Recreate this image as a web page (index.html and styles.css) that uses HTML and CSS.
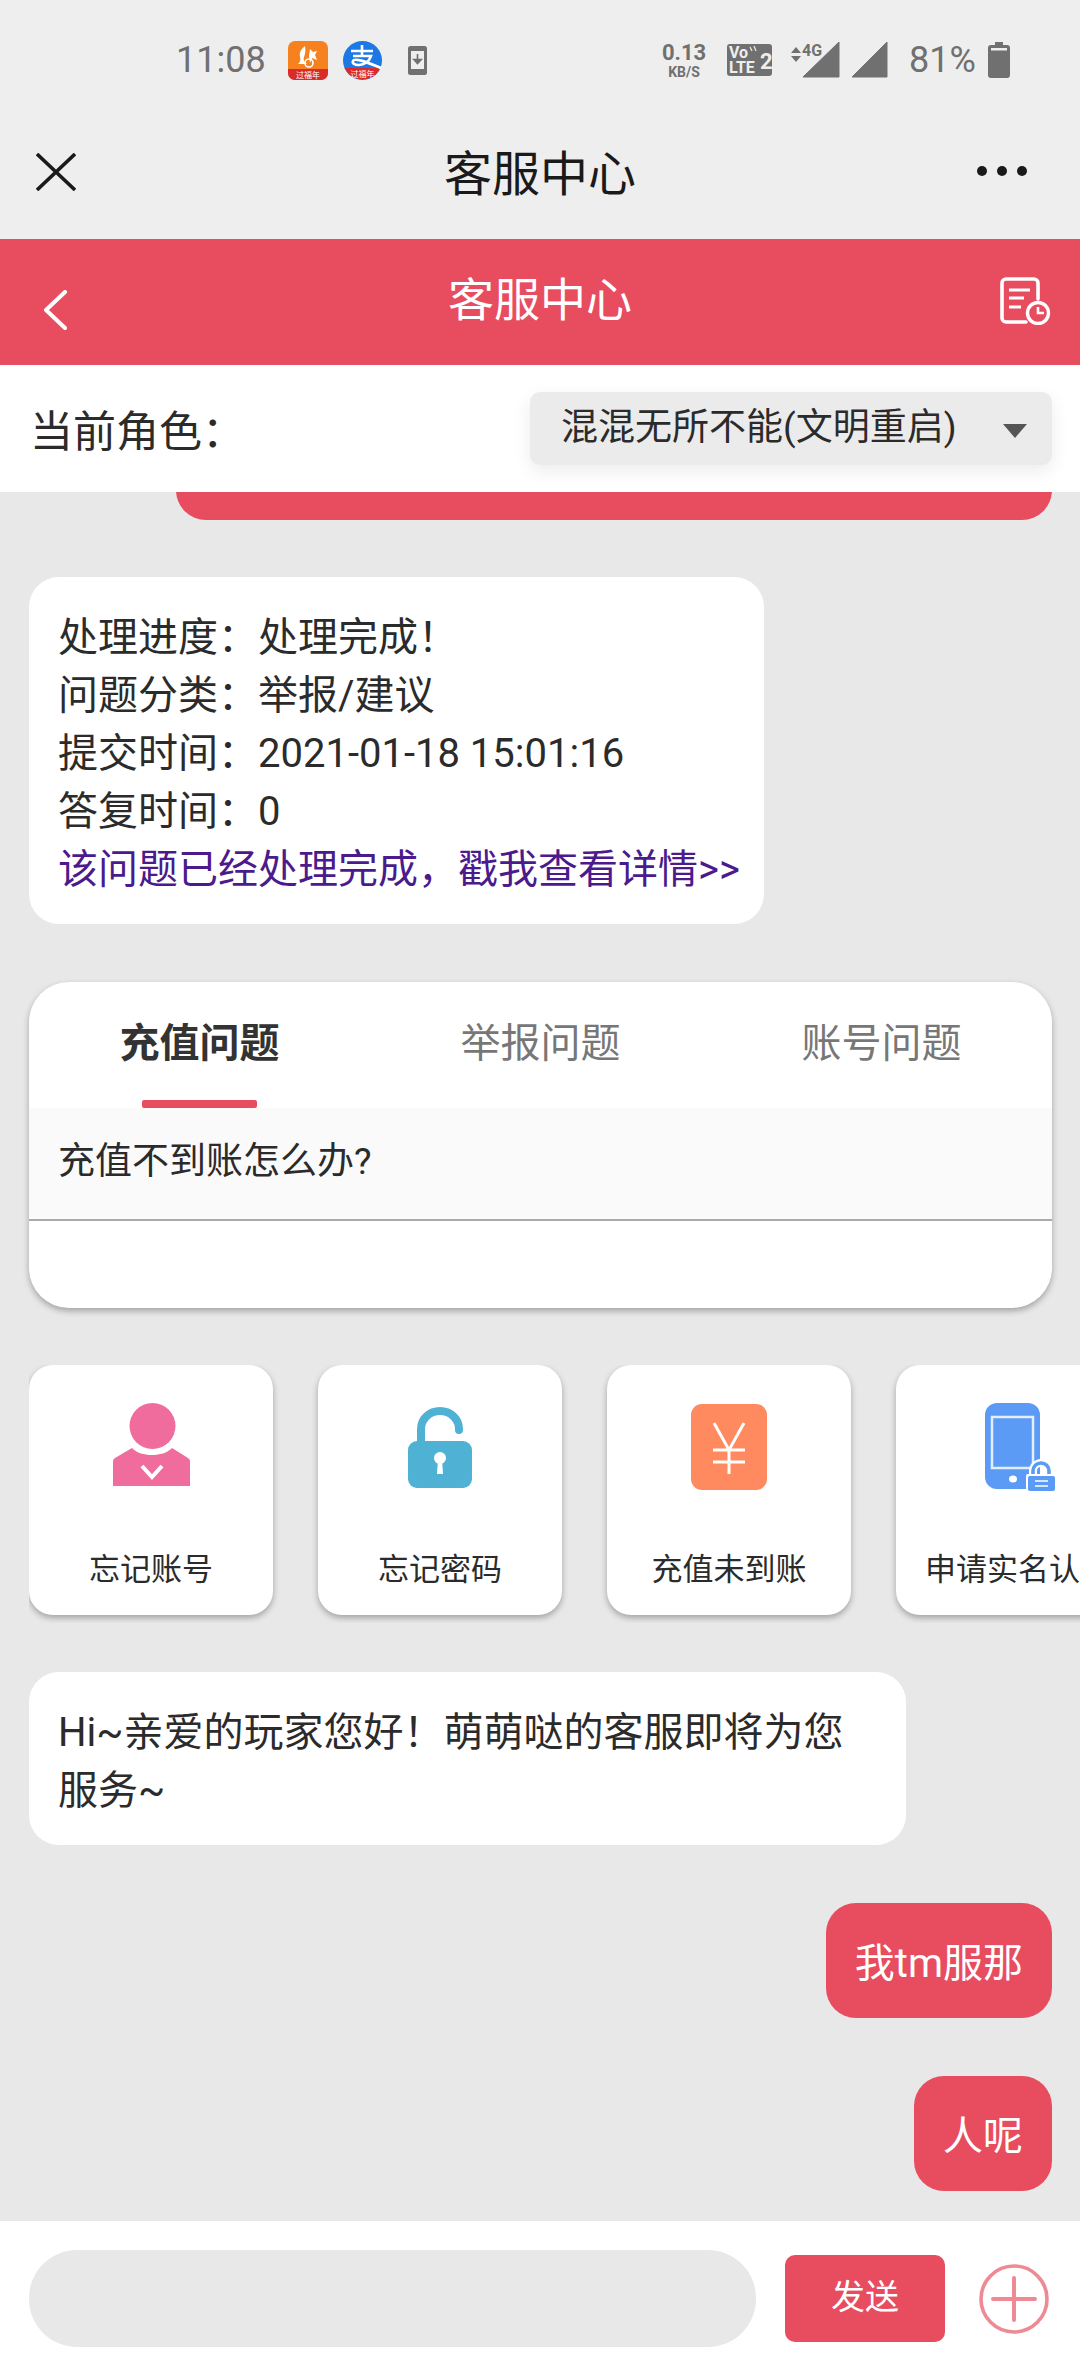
FILE: index.html
```html
<!DOCTYPE html>
<html lang="zh">
<head>
  <meta charset="utf-8">
  <title>客服中心</title>
  <link rel="stylesheet" href="styles.css">
</head>
<body>
  <div class="page">
    <div class="statusbar">
      <span class="time">11:08</span>
      <svg class="app-uc" width="40" height="39" viewBox="0 0 40 39">
        <rect width="40" height="39" rx="7" fill="#f5821f"/>
        <path d="M0 28h40v4a7 7 0 0 1-7 7H7a7 7 0 0 1-7-7z" fill="#d92b2b"/>
        <path d="M17 5c-4 3-6 7-5 11 1 3 0 5-2 7h9c-3-2-4-4-3-7 1-3 2-6 1-11z" fill="#fff"/>
        <path d="M22 8l3 3 4-1-2 4 2 5-5-2-2 5-1-7z" fill="#fff"/>
        <circle cx="21" cy="22" r="4" fill="none" stroke="#fff" stroke-width="1.6"/>
        <text x="20" y="36.5" class="tiny-text">过福年</text>
      </svg>
      <svg class="app-ali" width="41" height="39" viewBox="0 0 41 39">
        <circle cx="20.5" cy="19.5" r="19.5" fill="#1b78e4"/>
        <path d="M2.5 27h36a20 20 0 0 1-36 0z" fill="#d92b2b"/>
        <path d="M9 10h22M20 4v11M11 15h18c-2 6-7 9-12 9-5 0-7-2-6-4 1-3 9-1 28 7" fill="none" stroke="#fff" stroke-width="2.6"/>
        <text x="20.5" y="36" class="tiny-text">过福年</text>
      </svg>
      <svg class="dl-phone" width="19" height="29" viewBox="0 0 19 29">
        <rect width="19" height="29" rx="2.5" fill="#707070"/>
        <rect x="3" y="5" width="13" height="18" fill="#eee"/>
        <path d="M9.5 8v9M5.8 13.5l3.7 4 3.7-4z" fill="#707070" stroke="#707070" stroke-width="1.6"/>
      </svg>
      <div class="speed">
        <span class="speed-num">0.13</span>
        <span class="speed-unit">KB/S</span>
      </div>
      <svg class="volte" width="45" height="32" viewBox="0 0 45 32">
        <rect width="45" height="32" rx="3" fill="#707070"/>
        <text x="2" y="14" class="volte-text">Vo</text>
        <text x="2" y="29" class="volte-text">LTE</text>
        <text x="33" y="25" class="volte-two">2</text>
        <path d="M23 3l2 4M27 2l2 5" stroke="#eee" stroke-width="1.2"/>
      </svg>
      <svg class="signal-main" width="55" height="36" viewBox="0 0 55 36">
        <path d="M5 11l5-6 5 6zM5 14h10l-5 6z" fill="#707070"/>
        <path d="M53 0v35H17z" fill="#707070" stroke="#707070" stroke-linejoin="round"/>
        <text x="16" y="14" class="four-g">4G</text>
      </svg>
      <svg class="signal-two" width="36" height="36" viewBox="0 0 36 36">
        <path d="M35 0v35H0z" fill="#707070" stroke="#707070" stroke-linejoin="round"/>
      </svg>
      <span class="percent">81%</span>
      <svg class="battery" width="22" height="36" viewBox="0 0 22 36">
        <path d="M7 0h8v3h4a3 3 0 0 1 3 3v27a3 3 0 0 1-3 3H3a3 3 0 0 1-3-3V6a3 3 0 0 1 3-3h4z" fill="#707070"/>
        <rect x="3" y="6" width="16" height="2.5" fill="#eee"/>
      </svg>
    </div>

    <div class="navbar">
      <svg class="nav-close" width="40" height="38" viewBox="0 0 40 38">
        <path d="M1 1l38 36M39 1L1 37" stroke="#1a1a1a" stroke-width="3.6" fill="none"/>
      </svg>
      <span class="nav-title">客服中心</span>
      <div class="nav-more"><i></i><i></i><i></i></div>
    </div>

    <div class="redbar">
      <svg class="back" width="24" height="40" viewBox="0 0 24 40">
        <path d="M22 2L3 20l19 18" fill="none" stroke="#fff" stroke-width="4" stroke-linecap="round" stroke-linejoin="round"/>
      </svg>
      <span class="red-title">客服中心</span>
      <svg class="history" width="52" height="48" viewBox="0 0 52 48">
        <path d="M38 22V6a4 4 0 0 0-4-4H6a4 4 0 0 0-4 4v35a4 4 0 0 0 4 4h20" fill="none" stroke="#fff" stroke-width="3.6" stroke-linecap="round"/>
        <path d="M9 13h21M9 21h15M9 30h12" stroke="#fff" stroke-width="3.2" fill="none"/>
        <circle cx="38" cy="36" r="10.5" fill="#e84c5f" stroke="#fff" stroke-width="3.4"/>
        <path d="M38 30v6h6" fill="none" stroke="#fff" stroke-width="2.6"/>
      </svg>
    </div>

    <div class="rolebar">
      <span class="role-label">当前角色：</span>
      <div class="role-select">
        <span>混混无所不能(文明重启)</span>
        <i class="caret"></i>
      </div>
    </div>

    <div class="chat">
      <div class="clipped-bubble"></div>

      <div class="bubble bubble-info">
        <p>处理进度：处理完成！</p>
        <p>问题分类：举报/建议</p>
        <p>提交时间：2021-01-18 15:01:16</p>
        <p>答复时间：0</p>
        <p class="link">该问题已经处理完成，戳我查看详情&gt;&gt;</p>
      </div>

      <div class="tabcard">
        <div class="tabs">
          <div class="tab tab-on">充值问题</div>
          <div class="tab">举报问题</div>
          <div class="tab">账号问题</div>
        </div>
        <div class="question">充值不到账怎么办?</div>
        <div class="tab-empty"></div>
      </div>

      <div class="shortcuts">
        <div class="shortcut">
          <svg class="icon-person" width="77" height="85" viewBox="0 0 77 85">
            <circle cx="39.5" cy="24" r="23" fill="#ef6c9c"/>
            <path d="M0 59a4 4 0 0 1 2-3l17-10c5 5 12 7 20 7s15-2 20-7l16 10a4 4 0 0 1 2 3v25H0z" fill="#ef6c9c"/>
            <path d="M29 64l10 11 10-11" fill="none" stroke="#fff" stroke-width="4"/>
          </svg>
          <span class="shortcut-label">忘记账号</span>
        </div>
        <div class="shortcut">
          <svg class="icon-lock" width="64" height="81" viewBox="0 0 64 81">
            <path d="M13 36V22a19 18 0 0 1 38 0v1" fill="none" stroke="#4fb1d4" stroke-width="8" stroke-linecap="round"/>
            <rect y="34" width="64" height="47" rx="9" fill="#4fb1d4"/>
            <circle cx="32" cy="51" r="6" fill="#fff"/>
            <path d="M30 52h4l1 15h-6z" fill="#fff"/>
          </svg>
          <span class="shortcut-label">忘记密码</span>
        </div>
        <div class="shortcut">
          <svg class="icon-yen" width="76" height="86" viewBox="0 0 76 86">
            <rect width="76" height="86" rx="11" fill="#ff8a5f"/>
            <path d="M23 19l15 27 15-27M38 46v24M22 46h32M22 58h32" fill="none" stroke="#fff" stroke-width="3"/>
          </svg>
          <span class="shortcut-label">充值未到账</span>
        </div>
        <div class="shortcut">
          <svg class="icon-phone" width="72" height="90" viewBox="0 0 72 90">
            <rect x="1" y="1" width="55" height="86" rx="12" fill="#5b9bf5"/>
            <rect x="8" y="15" width="41" height="51" fill="#5b9bf5" stroke="#e3eefd" stroke-width="2.5"/>
            <ellipse cx="29" cy="77" rx="4" ry="3.5" fill="#fff"/>
            <path d="M49 75V69a8 8 0 0 1 16 0v6" fill="none" stroke="#fff" stroke-width="8"/>
            <path d="M49 75V69a8 8 0 0 1 16 0v6" fill="none" stroke="#5b9bf5" stroke-width="3.6"/>
            <rect x="42" y="72" width="30" height="18" rx="2" fill="#fff"/>
            <rect x="44" y="74" width="27" height="15" rx="2" fill="#5b9bf5"/>
            <path d="M51 79h13M51 84h13" stroke="#fff" stroke-width="1.5"/>
          </svg>
          <span class="shortcut-label">申请实名认证</span>
        </div>
      </div>

      <div class="bubble bubble-hello">Hi~亲爱的玩家您好！萌萌哒的客服即将为您服务~</div>
      <div class="bubble bubble-me">我tm服那</div>
      <div class="bubble bubble-me">人呢</div>
    </div>

    <div class="inputbar">
      <div class="input-box"></div>
      <div class="send-btn">发送</div>
      <svg class="plus" width="70" height="70" viewBox="0 0 70 70">
        <circle cx="35" cy="35" r="33" fill="none" stroke="#ee8a93" stroke-width="3.6"/>
        <path d="M35 14v42M14 35h42" stroke="#ee8a93" stroke-width="4" stroke-linecap="round"/>
      </svg>
    </div>
  </div>
</body>
</html>
```

FILE: styles.css
```css
* {
  box-sizing: border-box;
}

body {
  margin: 0;
  font-family: Roboto, "Noto Sans CJK SC", sans-serif;
  color: #2b2b2b;
}

p {
  margin: 0;
}

.page {
  width: 1080px;
  height: 2376px;
  display: flex;
  flex-direction: column;
  overflow: hidden;
  background-color: #e8e8e8;
}

/* status bar */
.statusbar {
  height: 106px;
  padding-top: 14px;
  background-color: #eeeeee;
  display: flex;
  align-items: center;
  color: #707070;
}

.time {
  margin-left: 176px;
  font-size: 36px;
  width: 91px;
}

.app-uc {
  margin-left: 21px;
}

.app-ali {
  margin-left: 14px;
}

.dl-phone {
  margin-left: 25px;
}

.speed {
  margin-left: 236px;
  width: 42px;
  display: flex;
  flex-direction: column;
  align-items: center;
  font-weight: 700;
  line-height: 1;
}

.speed-num {
  font-size: 22px;
}

.speed-unit {
  font-size: 14px;
  margin-top: 1px;
}

.volte {
  margin-left: 22px;
}

.volte-text {
  font-family: Roboto, sans-serif;
  font-size: 16px;
  font-weight: 700;
  fill: #eee;
}

.volte-two {
  font-family: Roboto, sans-serif;
  font-size: 22px;
  font-weight: 700;
  fill: #eee;
}

.signal-main {
  margin-left: 14px;
}

.four-g {
  font-family: Roboto, sans-serif;
  font-size: 16px;
  font-weight: 700;
  fill: #707070;
}

.signal-two {
  margin-left: 11px;
}

.percent {
  margin-left: 21px;
  font-size: 36px;
  width: 68px;
}

.battery {
  margin-left: 11px;
}

.tiny-text {
  font-family: "Noto Sans CJK SC", sans-serif;
  font-size: 8px;
  fill: #fff;
  text-anchor: middle;
}

/* title bar */
.navbar {
  height: 133px;
  padding-bottom: 5px;
  background-color: #eeeeee;
  display: flex;
  align-items: center;
  justify-content: center;
  position: relative;
}

.nav-title {
  font-size: 48px;
  color: #1a1a1a;
}

.nav-close {
  position: absolute;
  left: 36px;
  top: 47px;
}

.nav-more {
  position: absolute;
  right: 53px;
  top: 60px;
  display: flex;
  gap: 10px;
}

.nav-more i {
  width: 10px;
  height: 10px;
  border-radius: 50%;
  background-color: #1a1a1a;
}

.redbar {
  height: 126px;
  padding-bottom: 12px;
  background-color: #e84c5f;
  display: flex;
  align-items: center;
  justify-content: center;
  position: relative;
}

.red-title {
  font-size: 46px;
  color: #fff;
}

.back {
  position: absolute;
  left: 43px;
  top: 51px;
}

.history {
  position: absolute;
  right: 28px;
  top: 38px;
}

.rolebar {
  height: 127px;
  padding: 0 28px 0 30px;
  background-color: #fff;
  display: flex;
  align-items: center;
  justify-content: space-between;
  position: relative;
  z-index: 1;
}

.role-label {
  font-size: 43px;
  margin-top: -2px;
}

.role-select {
  width: 522px;
  height: 73px;
  padding: 0 25px 0 31px;
  background-color: #ebebeb;
  border-radius: 10px;
  box-shadow: 0 6px 18px rgba(0, 0, 0, 0.08);
  display: flex;
  align-items: center;
  justify-content: space-between;
  font-size: 37px;
}

.role-select span {
  margin-top: -10px;
}

.caret {
  width: 0;
  height: 0;
  margin-top: 4px;
  border-left: 12px solid transparent;
  border-right: 12px solid transparent;
  border-top: 14px solid #555;
}

/* chat */
.chat {
  flex: 1;
  min-height: 0;
  overflow: hidden;
  padding: 0 28px 0 29px;
  display: flex;
  flex-direction: column;
  align-items: flex-start;
}

.clipped-bubble {
  width: 876px;
  height: 60px;
  margin-top: -32px;
  margin-left: 147px;
  flex: none;
  background-color: #e84c5f;
  border-radius: 30px;
}

.bubble {
  flex: none;
  padding: 32px 29px 25px;
  background-color: #fff;
  border-radius: 30px;
  font-size: 40px;
  line-height: 58px;
}

.bubble-info {
  width: 735px;
  margin-top: 57px;
}

.link {
  color: #4b1a8c;
  white-space: nowrap;
}

.tabcard {
  flex: none;
  width: 1023px;
  height: 326px;
  margin-top: 58px;
  background-color: #fff;
  border-radius: 40px;
  box-shadow: 0 3px 6px rgba(0, 0, 0, 0.3);
  overflow: hidden;
  display: flex;
  flex-direction: column;
}

.tabs {
  height: 126px;
  display: flex;
}

.tab {
  flex: 1;
  text-align: center;
  padding-top: 33px;
  font-size: 40px;
  line-height: 58px;
  color: #777;
  position: relative;
}

.tab-on {
  font-weight: 700;
  color: #333;
}

.tab-on::after {
  content: "";
  position: absolute;
  left: 113px;
  bottom: 0;
  width: 115px;
  height: 8px;
  border-radius: 2px;
  background-color: #e84c5f;
}

.question {
  height: 113px;
  padding: 0 29px;
  background-color: #fafafa;
  border-bottom: 2px solid #aaa;
  font-size: 37px;
  line-height: 108px;
}

.tab-empty {
  flex: 1;
}

.shortcuts {
  flex: none;
  width: 1051px;
  margin-top: 57px;
  padding-bottom: 8px;
  display: flex;
  gap: 45px;
  overflow: hidden;
}

.shortcut {
  flex: none;
  width: 244px;
  height: 250px;
  background-color: #fff;
  border-radius: 24px;
  box-shadow: 0 3px 6px rgba(0, 0, 0, 0.3);
  display: flex;
  flex-direction: column;
  align-items: center;
  position: relative;
}

.icon-person {
  margin-top: 37px;
}

.icon-lock {
  margin-top: 42px;
}

.icon-yen {
  margin-top: 39px;
}

.icon-phone {
  margin-top: 37px;
  margin-left: 4px;
}

.shortcut-label {
  position: absolute;
  top: 182px;
  left: 0;
  right: 0;
  text-align: center;
  font-size: 31px;
  line-height: 46px;
  white-space: nowrap;
}

.bubble-hello {
  width: 877px;
  margin-top: 49px;
}

.bubble-me {
  align-self: flex-end;
  margin-top: 58px;
  color: #fff;
  background-color: #e84c5f;
}

/* input */
.inputbar {
  height: 155px;
  padding: 0 30px 0 29px;
  background-color: #fff;
  display: flex;
  align-items: center;
  position: relative;
}

.input-box {
  width: 727px;
  height: 97px;
  border-radius: 48px;
  background-color: #e8e8e8;
}

.send-btn {
  width: 160px;
  height: 87px;
  margin-left: 29px;
  padding-bottom: 8px;
  border-radius: 10px;
  background-color: #e84c5f;
  color: #fff;
  font-size: 34px;
  display: flex;
  align-items: center;
  justify-content: center;
}

.plus {
  margin-left: 34px;
}
```
